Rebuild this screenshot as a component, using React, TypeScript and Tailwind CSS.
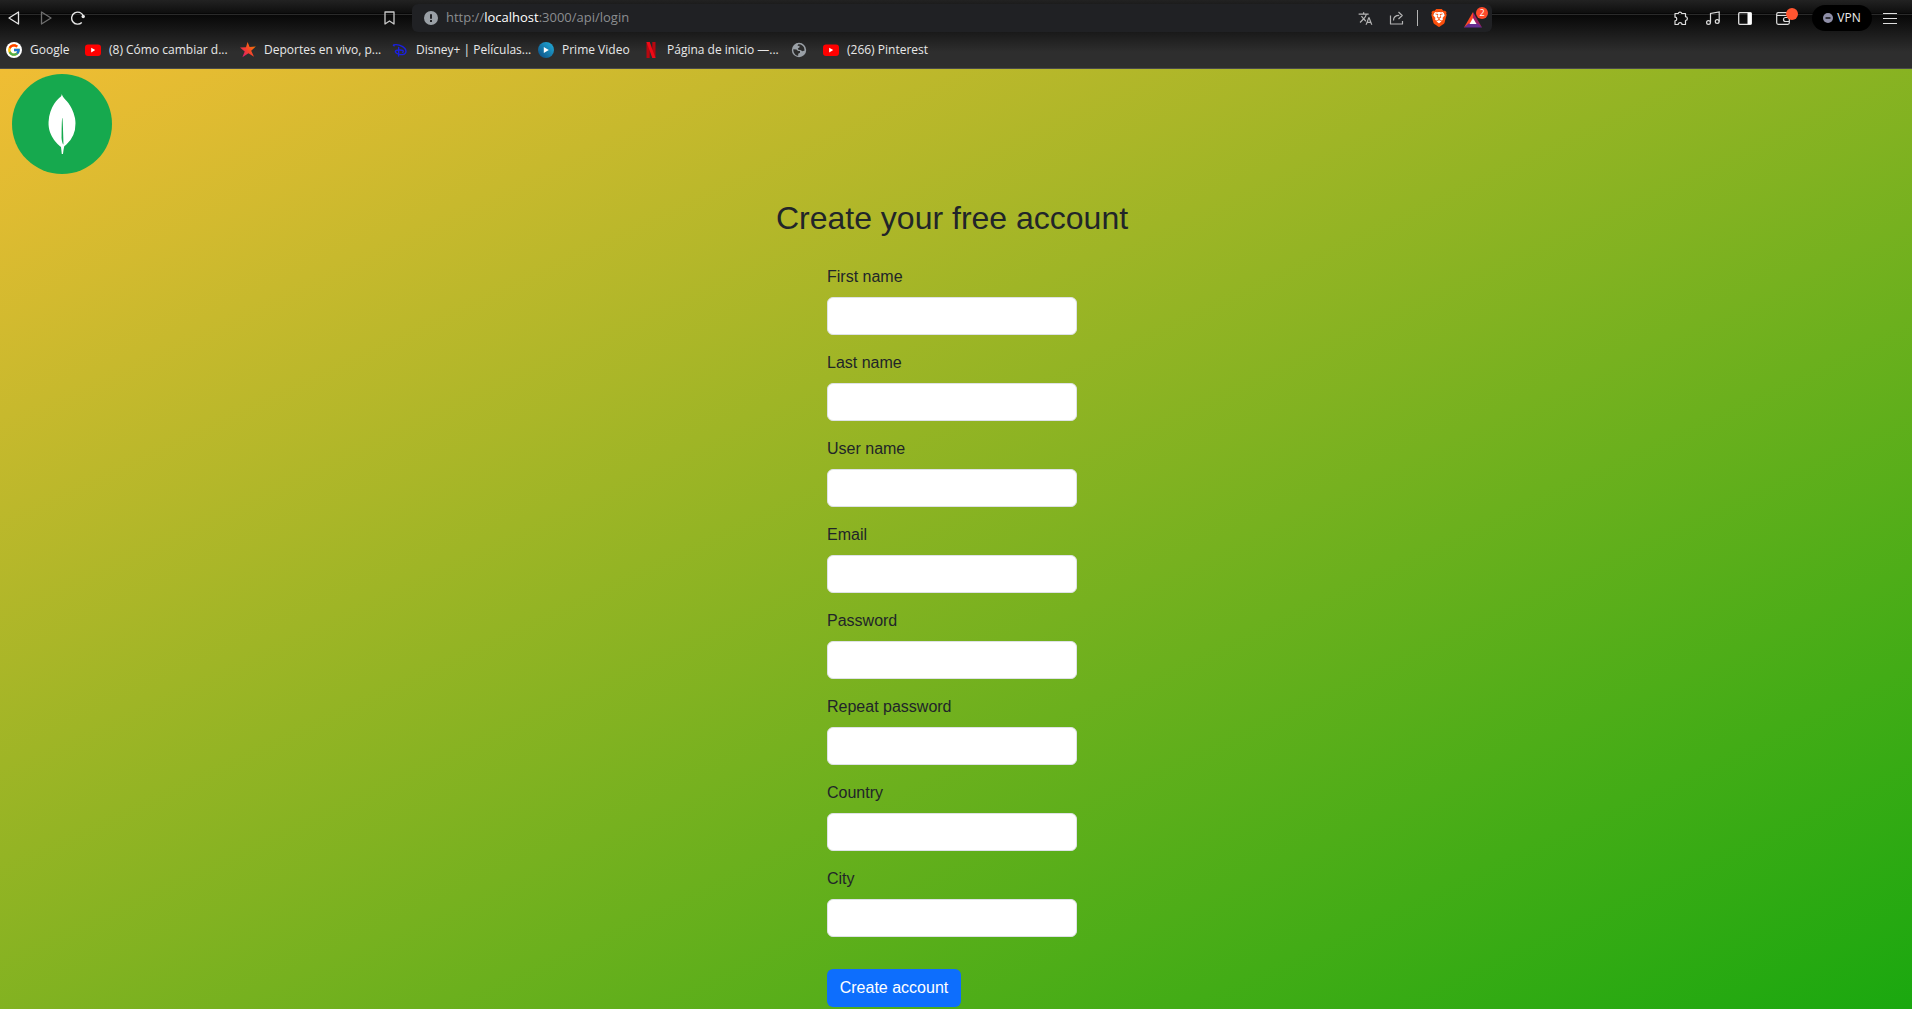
import React from "react";
import { SiBrave, SiMongodb } from "react-icons/si";
import { FcGoogle } from "react-icons/fc";
import { TbBrandDisney } from "react-icons/tb";
import { MdTranslate } from "react-icons/md";

const YouTube = () => (
  <svg width="16" height="16" viewBox="0 0 16 16">
    <rect y="2.5" width="16" height="11.5" rx="3" fill="#f00" />
    <path d="M6.2 5.8v4.6l4-2.3z" fill="#fff" />
  </svg>
);

const Google = () => (
  <span className="flex size-4 items-center justify-center rounded-full bg-white">
    <FcGoogle size={14} />
  </span>
);

const Star = () => (
  <svg width="16" height="16" viewBox="0 0 16 16">
    <defs>
      <linearGradient id="star" gradientUnits="userSpaceOnUse" x1="0" y1="14" x2="14" y2="2">
        <stop offset="0" stopColor="#d8127c" />
        <stop offset=".5" stopColor="#f5402f" />
        <stop offset="1" stopColor="#f77b00" />
      </linearGradient>
    </defs>
    <path d="M7.600 0l2 5 6.200-.6-4.600 4.400 2.800 6-5.600-3.600L2.400 15.200l2.300-5.700L0 5.400l6-.2z" fill="url(#star)" />
  </svg>
);

const Disney = () => (
  <span className="flex size-4 items-center justify-center text-[#1a20e0]">
    <TbBrandDisney size={18} />
  </span>
);

const Prime = () => (
  <svg width="16" height="16" viewBox="0 0 16 16">
    <defs>
      <linearGradient id="prime" x1="1" y1="0" x2="0" y2="1">
        <stop offset="0" stopColor="#22b0dc" />
        <stop offset="1" stopColor="#0c4a80" />
      </linearGradient>
    </defs>
    <circle cx="8" cy="8" r="8" fill="url(#prime)" />
    <path d="M5.800 5v6l5-3z" fill="#fff" />
  </svg>
);

const Netflix = () => (
  <svg width="16" height="16" viewBox="0 0 16 16">
    <path d="M3.500 0h3.200v16H3.500zM9.300 0h3.200v16H9.300z" fill="#b8070f" />
    <path d="M3.500 0h3.200l5.800 16H9.300z" fill="#f00a17" />
  </svg>
);

const Globe = () => (
  <svg width="16" height="16" viewBox="0 0 16 16">
    <circle cx="8" cy="8" r="7.200" fill="#9aa0a6" />
    <path d="M2.300 7.200l3.200.2 1.500 1.500 2 .2v1.600l-1.800 1v2.100C4.500 13.500 2.100 11 2.300 7.200zM7 2.400c2.500-.5 5 .8 6 3.200l.6 2.800-2.200.8-2-1.200-2-.3-.6-1.200 1.800-1.300-.2-1.400-1.800.2z" fill="#2c2c2c" />
  </svg>
);

const bookmarks = [
  { label: "Google", icon: <Google />, width: "w-[79px]" },
  { label: "(8) Cómo cambiar d...", icon: <YouTube />, width: "w-[155px]" },
  { label: "Deportes en vivo, p...", icon: <Star />, width: "w-[152px]" },
  { label: "Disney+ | Películas...", icon: <Disney />, width: "w-[146px]" },
  { label: "Prime Video", icon: <Prime />, width: "w-[105px]" },
  { label: "Página de inicio —...", icon: <Netflix />, width: "w-[148px]" },
  { label: "", icon: <Globe />, width: "w-8" },
  { label: "(266) Pinterest", icon: <YouTube />, width: "w-[120px]" },
];

const fields = [
  { id: "first", label: "First name", type: "text" },
  { id: "last", label: "Last name", type: "text" },
  { id: "user", label: "User name", type: "text" },
  { id: "email", label: "Email", type: "email" },
  { id: "password", label: "Password", type: "password" },
  { id: "repeat", label: "Repeat password", type: "password" },
  { id: "country", label: "Country", type: "text" },
  { id: "city", label: "City", type: "text" },
];

function AddressBar() {
  return (
    <div className="ml-2 flex h-7 w-[1080px] items-center rounded-md bg-[#202124] pr-1 pl-3">
      <svg width="14" height="14" viewBox="0 0 14 14" aria-hidden="true">
        <circle cx="7" cy="7" r="7" fill="#9aa0a6" />
        <path d="M6 3.200h2v4.600H6zM6 9h2v2H6z" fill="#202124" />
      </svg>
      <div className="ml-2 flex-1 text-[13px] text-[#8b8d90]">
        http://<span className="text-white">localhost</span>:3000/api/login
      </div>
      <button aria-label="Translate" className="text-[#b4b4b4]">
        <MdTranslate size={15} />
      </button>
      <button aria-label="Share" className="ml-4 text-[#b4b4b4]">
        <svg width="16" height="16" viewBox="0 0 16 16" fill="none" stroke="currentColor" strokeWidth="1.200" strokeLinejoin="round">
          <path d="M1.500 5.500v8.500h12V11M4.500 10.500C4.500 7 7 5.300 10.200 5.300M9.500 2l3.700 3.500-3.700 3.500" />
        </svg>
      </button>
      <span className="ml-3 h-4 w-px bg-[#b4b4b4]" />
      <button aria-label="Brave Shields" className="relative ml-3 size-[18px] text-[#fb4f0c]">
        <svg width="18" height="18" viewBox="0 0 18 18">
          <path d="M4 3h10l1 4-2 6-4 3-4-3-2-6z" fill="#fff" />
        </svg>
        <SiBrave size={18} className="absolute inset-0" />
      </button>
      <button aria-label="Brave Rewards, 2 new" className="relative ml-4 h-5 w-6">
        <svg width="18" height="16" viewBox="0 0 18 16" className="mt-1">
          <path d="M9 0L0 15.500l9-5z" fill="#ff4724" />
          <path d="M9 0l9 15.500-9-5z" fill="#9e1f63" />
          <path d="M0 15.500h18l-4.500-4h-9z" fill="#662d91" />
          <path d="M9 6l-3.500 6h7z" fill="#fff" />
        </svg>
        <span className="absolute -top-px right-0 flex size-3 items-center justify-center rounded-full bg-[#ff4a2a] text-[9px] text-white">2</span>
      </button>
    </div>
  );
}

function Toolbar() {
  return (
    <div className="flex h-9 items-center pl-2">
      <button aria-label="Back" className="text-[#e6e6e6]">
        <svg width="12" height="14" viewBox="0 0 12 14" fill="none" stroke="currentColor" strokeWidth="1.300" strokeLinejoin="round"><path d="M10.500 1v12L1 7z" /></svg>
      </button>
      <button aria-label="Forward" className="ml-5 text-[#6f6f6f]">
        <svg width="12" height="14" viewBox="0 0 12 14" fill="none" stroke="currentColor" strokeWidth="1.300" strokeLinejoin="round"><path d="M1.500 1v12L11 7z" /></svg>
      </button>
      <button aria-label="Reload" className="ml-[19px] text-[#e6e6e6]">
        <svg width="14" height="14" viewBox="0 0 14 14" fill="none" stroke="currentColor" strokeWidth="1.400"><path d="M10.800 11.500A6 6 0 1 1 12.200 4.800" /><circle cx="12.200" cy="5.500" r="1.700" fill="currentColor" stroke="none" /></svg>
      </button>
      <button aria-label="Bookmark this page" className="ml-[299px] text-[#c9c9c9]">
        <svg width="11" height="14" viewBox="0 0 11 14" fill="none" stroke="currentColor" strokeWidth="1.300" strokeLinejoin="round"><path d="M1 1h9v12l-4.500-3L1 13z" /></svg>
      </button>
      <div className="w-[9px]" />
      <AddressBar />
      <div className="ml-auto flex items-center pr-[15px] text-[#dedede]">
        <button aria-label="Extensions">
          <svg width="15" height="15" viewBox="0 0 15 15" fill="none" stroke="currentColor" strokeWidth="1.200" strokeLinejoin="round"><path d="M2 2.500h3.200a1.900 1.900 0 0 1 3.600 0H12.500v3.200a1.900 1.900 0 0 1 0 3.800v4H9a1.900 1.900 0 0 0-3.800 0H2V9.800a1.800 1.800 0 0 0 0-3.600z" /></svg>
        </button>
        <button aria-label="Media" className="ml-[18px]">
          <svg width="14" height="14" viewBox="0 0 14 14" fill="none" stroke="currentColor" strokeWidth="1.200"><circle cx="2.500" cy="11.500" r="1.900" /><circle cx="11.200" cy="10.500" r="1.900" /><path d="M4.500 11.500V2.500l8.700-1.500V10.500" /></svg>
        </button>
        <button aria-label="Sidebar" className="ml-[18px]">
          <svg width="14" height="13" viewBox="0 0 14 13" fill="none" stroke="currentColor" strokeWidth="1.300"><rect x=".7" y=".7" width="12.600" height="11.600" rx="1" /><path d="M9.500.7h4v11.600h-4z" fill="#fff" stroke="none" /></svg>
        </button>
        <button aria-label="Wallet" className="relative ml-6 w-[22px]">
          <svg width="14" height="13" viewBox="0 0 14 13" fill="none" stroke="currentColor" strokeWidth="1.200"><rect x=".7" y=".7" width="12.600" height="11.600" rx="1.500" /><path d="M1 3.500h12M13.300 5.500H9.500a2 2 0 0 0 0 4h3.800" /></svg>
          <span className="absolute -top-1 right-0 size-3 rounded-full bg-[#ff5530]" />
        </button>
        <button className="ml-[14px] flex h-[26px] w-[60px] items-center justify-center gap-1 rounded-full bg-black text-xs text-[#ededed]">
          <svg width="10" height="10" viewBox="0 0 10 10"><circle cx="5" cy="5" r="5" fill="#8f8fa8" /><path d="M2.500 5h5" stroke="#000" strokeWidth="1.300" /></svg>
          VPN
        </button>
        <button aria-label="Menu" className="ml-[11px]">
          <svg width="14" height="12" viewBox="0 0 14 12" stroke="currentColor" strokeWidth="1"><path d="M0 1.500h14M0 6.500h14M0 11.500h14" /></svg>
        </button>
      </div>
    </div>
  );
}

export default function App() {
  return (
    <div className="flex min-h-screen flex-col">
      <header className="h-[69px] border-b border-[#4a4a4a] bg-[linear-gradient(#222222_0px,#0e0e0e_13px,#000000_14px,#2a2a2a_14px,#2a2a2a_15px,#080808_15px,#121212_25px,#2e2e2e_52px)] font-['Open_Sans','Noto_Sans',sans-serif]">
        <Toolbar />
        <nav aria-label="Bookmarks" className="flex h-7 items-center pl-[6px] text-xs text-[#e8e8e8]">
          {bookmarks.map((b) => (
            <a key={b.label} href="#" aria-label={b.label || "Website"} className={`flex shrink-0 items-center gap-2 whitespace-nowrap ${b.width}`}>
              {b.icon}
              {b.label}
            </a>
          ))}
        </nav>
      </header>
      <main className="flex-1 bg-linear-[155deg,#f0bd34,#1aa80f] font-['Liberation_Sans',Arial,sans-serif] text-[#212529]">
        <div className="px-3 pt-[5px]">
          <div className="flex size-[100px] items-center justify-center rounded-full bg-[#16a94e]">
            <SiMongodb size={60} color="#fff" />
          </div>
        </div>
        <form className="pr-2" onSubmit={(e) => e.preventDefault()}>
          <h2 className="mt-6 text-center text-[32px] leading-10">Create your free account</h2>
          <div className="mx-auto mt-[27px] w-[250px]">
            {fields.map((f) => (
              <div key={f.id} className="mb-4">
                <label htmlFor={f.id} className="mb-2 block text-base">{f.label}</label>
                <input id={f.id} type={f.type} className="block h-[38px] w-full rounded-md border border-[#dee2e6] bg-white px-3" />
              </div>
            ))}
            <button type="submit" className="mt-4 h-[38px] w-[134px] rounded-md bg-[#0d6efd] text-base text-white">Create account</button>
          </div>
        </form>
      </main>
    </div>
  );
}
